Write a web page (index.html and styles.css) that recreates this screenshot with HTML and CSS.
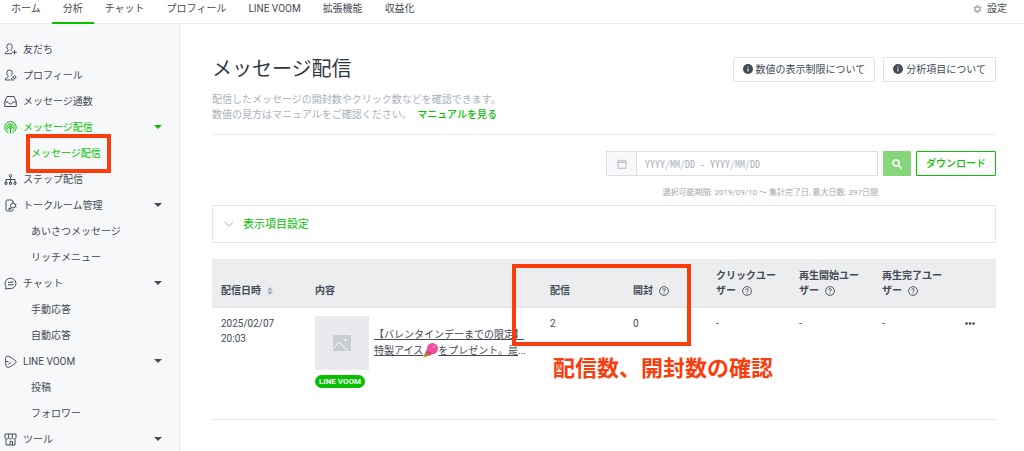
FILE: index.html
```html
<!DOCTYPE html>
<html lang="ja">
<head>
<meta charset="utf-8">
<title>メッセージ配信</title>
<link rel="stylesheet" href="styles.css">
</head>
<body>
<header class="topbar">
  <nav class="tabs">
    <a class="tab" href="#">ホーム</a>
    <a class="tab tab-active" href="#">分析</a>
    <a class="tab" href="#">チャット</a>
    <a class="tab" href="#">プロフィール</a>
    <a class="tab" href="#">LINE VOOM</a>
    <a class="tab" href="#">拡張機能</a>
    <a class="tab" href="#">収益化</a>
  </nav>
  <a class="settings" href="#">
    <svg class="gear" viewBox="0 0 20 20"><circle cx="10" cy="10" r="5" fill="none" stroke="currentColor" stroke-width="3"/><path d="M10 1v4M10 15v4M2.200 5.500l3.500 2M14.300 12.500l3.500 2M2.200 14.500l3.500-2M14.300 7.500l3.500-2" stroke="currentColor" stroke-width="4"/></svg>
    設定
  </a>
</header>
<div class="layout">
  <nav class="sidebar">
    <a class="item" href="#"><svg class="icon" viewBox="0 0 26 26"><path d="M16 21.500H2.500c-.5-3 1.500-4 5-5.500 1.500-.7 1.300-1.800.3-3C6.300 11 5.500 9.500 5.500 7a5.500 5.500 0 0 1 11 0c0 2.500-.8 4-2.300 6-.8 1.200-.8 2.200.8 3M21 14v9M16.500 18.500h9"/></svg>友だち</a>
    <a class="item" href="#"><svg class="icon" viewBox="0 0 26 26"><path d="M13 22H2.500c-.5-3 1.500-4 5-5.500 1.500-.7 1.300-1.800.3-3C6.300 11.500 5.500 10 5.500 7.500a5.500 5.500 0 0 1 11 0c0 2.500-.8 4-2.300 6M15.500 22.500v-3.500l5.500-6 3.500 3-5.500 6zM18.500 16l3 3"/></svg>プロフィール</a>
    <a class="item" href="#"><svg class="icon" viewBox="0 0 26 26"><path d="M6 3h14l4.500 10v10h-23V13zM1.500 14H8c.5 5 9.500 5 10 0h6.500"/></svg>メッセージ通数</a>
    <a class="item item-on" href="#"><svg class="icon" viewBox="0 0 26 26"><path d="M9 23.500a11.500 11.500 0 1 1 8 0M9 19a7.200 7.200 0 1 1 8 0M11.500 15.500a3.500 3.500 0 1 1 3 0M13 14.500V25"/><circle cx="13" cy="12.500" r="1.500"/></svg>メッセージ配信<i class="caret"></i></a>
    <a class="item item-sub item-on" href="#"><span class="marked">メッセージ配信</span></a>
    <a class="item" href="#"><svg class="icon" viewBox="0 0 26 26"><path d="M13 8.500V18M4 18v-5h18v5"/><circle cx="13" cy="5.500" r="2.500"/><path d="M2 18.500h4v4H2zM11 18.500h4v4h-4zM20 18.500h4v4h-4z"/></svg>ステップ配信</a>
    <a class="item" href="#"><svg class="icon" viewBox="0 0 26 26"><path d="M18 6V4.500C18 3 17 2 15.500 2h-9C5 2 4 3 4 4.500v17C4 23 5 24 6.500 24h9c1.500 0 2.500-1 2.500-2.500V20M8 20h5"/><circle cx="18" cy="13" r="5"/><path d="M12 17l-1 3 4-1.500M18 5v3M25 10l-2.500 1M25 16l-2.500-1"/></svg>トークルーム管理<i class="caret"></i></a>
    <a class="item item-sub" href="#">あいさつメッセージ</a>
    <a class="item item-sub" href="#">リッチメニュー</a>
    <a class="item" href="#"><svg class="icon" viewBox="0 0 26 26"><path d="M3 24l1-5A11 10.500 0 1 1 10 23zM8 10.500h11M8 15.500h11"/></svg>チャット<i class="caret"></i></a>
    <a class="item item-sub" href="#">手動応答</a>
    <a class="item item-sub" href="#">自動応答</a>
    <a class="item" href="#"><svg class="icon" viewBox="0 0 26 26"><path d="M5.500 24C2.500 20 2 6 4.500 3c1.500-2 6-.5 11 3S25 12 24.500 14s-5 5-9 7.500-8.500 4.500-10 2.500zM3 13h6M8.500 18.500l5-3.500"/></svg>LINE VOOM<i class="caret"></i></a>
    <a class="item item-sub" href="#">投稿</a>
    <a class="item item-sub" href="#">フォロワー</a>
    <a class="item" href="#"><svg class="icon" viewBox="0 0 26 26"><path d="M2 2h22v7c0 4-6 4-7.300 0C15.500 13 10.500 13 9.300 9 8 13 2 13 2 9zM9.300 2v7M16.700 2v7M4 12.500V24h18V12.500M12 24v-7h5v7"/></svg>ツール<i class="caret"></i></a>
  </nav>
  <main class="main">
    <div class="heading">
      <h1 class="title">メッセージ配信</h1>
      <div class="help">
        <button class="btn" type="button"><svg class="info" viewBox="0 0 20 20"><circle cx="10" cy="10" r="10" fill="currentColor"/><path d="M10 5v2M10 9v6" stroke="#fff" stroke-width="2"/></svg>数値の表示制限について</button>
        <button class="btn" type="button"><svg class="info" viewBox="0 0 20 20"><circle cx="10" cy="10" r="10" fill="currentColor"/><path d="M10 5v2M10 9v6" stroke="#fff" stroke-width="2"/></svg>分析項目について</button>
      </div>
    </div>
    <p class="lead">配信したメッセージの開封数やクリック数などを確認できます。<br>数値の見方はマニュアルをご確認ください。 <a class="manual" href="#">マニュアルを見る</a></p>
    <form class="filter">
      <div class="period">
        <label class="range">
          <span class="addon"><svg class="calendar" viewBox="0 0 20 20"><path d="M2 3.500h16v15H2zM2 7h16M6 1v3M14 1v3"/></svg></span>
          <input class="dates" type="text" placeholder="YYYY/MM/DD - YYYY/MM/DD" aria-label="期間">
        </label>
        <p class="note">選択可能期間: 2019/09/10 〜 集計完了日, 最大日数: 397日間</p>
      </div>
      <button class="search" type="button" aria-label="検索"><svg class="lens" viewBox="0 0 20 20"><circle cx="8" cy="8" r="6"/><path d="M12.500 12.500l6.500 6.500"/></svg></button>
      <button class="download" type="button">ダウンロード</button>
    </form>
    <button class="panel" type="button"><svg class="chevron" viewBox="0 0 20 12"><path d="M1 1.500l9 9 9-9"/></svg>表示項目設定</button>
    <div class="report">
      <table class="table">
        <colgroup><col class="c-date"><col class="c-body"><col class="c-num"><col class="c-num"><col class="c-num"><col class="c-num"><col class="c-num"><col></colgroup>
        <thead>
          <tr>
            <th>配信日時<svg class="sort" viewBox="0 0 12 16"><path d="M6 0l6 7H0zM6 16l6-7H0z"/></svg></th>
            <th>内容</th>
            <th>配信</th>
            <th>開封<svg class="q" viewBox="0 0 20 20"><circle cx="10" cy="10" r="8.800"/><path d="M7.500 8c0-3.500 5-3.500 5-.5 0 2-2.500 2-2.500 4.200M10 13.500v2"/></svg></th>
            <th>クリックユーザー<svg class="q" viewBox="0 0 20 20"><circle cx="10" cy="10" r="8.800"/><path d="M7.500 8c0-3.500 5-3.500 5-.5 0 2-2.500 2-2.500 4.200M10 13.500v2"/></svg></th>
            <th>再生開始ユーザー<svg class="q" viewBox="0 0 20 20"><circle cx="10" cy="10" r="8.800"/><path d="M7.500 8c0-3.500 5-3.500 5-.5 0 2-2.500 2-2.500 4.200M10 13.500v2"/></svg></th>
            <th>再生完了ユーザー<svg class="q" viewBox="0 0 20 20"><circle cx="10" cy="10" r="8.800"/><path d="M7.500 8c0-3.500 5-3.500 5-.5 0 2-2.500 2-2.500 4.200M10 13.500v2"/></svg></th>
            <th></th>
          </tr>
        </thead>
        <tbody>
          <tr>
            <td>2025/02/07<br>20:03</td>
            <td>
              <div class="post">
                <div class="thumb"><svg class="picture" viewBox="0 0 54 48"><rect width="54" height="48" rx="3" fill="#c9cdd2"/><path d="M0 41l18-20 27 27" fill="none" stroke="#e9eaee" stroke-width="4"/><circle cx="38" cy="16" r="4" fill="#e9eaee"/></svg></div>
                <a class="post-link" href="#">【バレンタインデーまでの限定】<br>特製アイス<svg class="ice" viewBox="0 0 30 30"><path d="M0 29L7 14l10 10z" fill="#c98a4b"/><path d="M3 24l6 1M5 19l8 6M9 16L5 26" stroke="#9b6230"/><circle cx="19" cy="11" r="11" fill="#ee4fa0"/><path d="M6 13c0 5 2 4 3 7 2 0 2 3 5 4 3 0 3-3 7-3-8-2-11-5-15-8z" fill="#d9308a"/><circle cx="22" cy="7" r="3" fill="#f97dbd"/></svg>をプレゼント。是</a>
              </div>
              <div class="badge">LINE VOOM</div>
            </td>
            <td>2</td>
            <td>0</td>
            <td>-</td>
            <td>-</td>
            <td>-</td>
            <td><button class="more" type="button" aria-label="メニュー"><svg class="dots" viewBox="0 0 20 6"><circle cx="3" cy="3" r="2.400"/><circle cx="10" cy="3" r="2.400"/><circle cx="17" cy="3" r="2.400"/></svg></button></td>
          </tr>
        </tbody>
      </table>
      <div class="frame"></div>
      <p class="callout">配信数、開封数の確認</p>
    </div>
  </main>
</div>
</body>
</html>
```
FILE: styles.css
```css
* { box-sizing: border-box; }
body {
  margin: 0;
  min-height: 100vh;
  display: flex;
  flex-direction: column;
  background: #fff;
  color: #444b55;
  font: 10px/15px Roboto, "Noto Sans CJK JP", sans-serif;
}
a { color: inherit; text-decoration: none; }
p, h1 { margin: 0; }
button, input { font: inherit; color: inherit; }
svg { flex: none; }

.topbar {
  display: flex;
  justify-content: space-between;
  height: 24px;
  border-bottom: 1px solid #e9ebee;
}
.tabs { display: flex; }
.tab { height: 24px; padding: 0 11px; line-height: 17px; }
.tab-active { border-bottom: 2px solid #08bf00; }
.settings {
  display: flex;
  align-items: center;
  gap: 5px;
  height: 17px;
  padding-right: 17px;
}
.gear { width: 9px; height: 10px; color: #a5b0bb; }

.layout { display: flex; flex: 1; height: 0; overflow: hidden; }
.sidebar {
  flex: none;
  width: 180px;
  padding-top: 12px;
  background: #f7f8fa;
  border-right: 1px solid #e6e8eb;
}
.item {
  display: flex;
  align-items: center;
  gap: 6px;
  height: 26px;
  padding: 0 17px 0 4px;
}
.item-sub { padding-left: 31px; }
.item-on { color: #08bf00; }
.icon {
  width: 13px;
  height: 13px;
  fill: none;
  stroke: currentColor;
  stroke-width: 2;
}
.caret {
  margin-left: auto;
  border: 4px solid transparent;
  border-top-color: currentColor;
  border-bottom: 0;
}
.marked { position: relative; }
.marked::after {
  content: "";
  position: absolute;
  inset: -12px -10px -12px -5px;
  border: 4px solid #fb3c0c;
}

.main { flex: 1; min-width: 0; padding: 31px 28px 0 32px; }
.heading { display: flex; justify-content: space-between; align-items: center; }
.title { font-size: 20px; font-weight: 400; line-height: 28px; color: #303741; }
.help { display: flex; gap: 8px; }
.btn {
  display: flex;
  align-items: center;
  gap: 3px;
  height: 25px;
  padding: 0 9px;
  background: #fff;
  border: 1px solid #dfe1e9;
  border-radius: 1px;
}
.info { width: 10px; height: 10px; }
.lead {
  padding: 9px 0 12px;
  border-bottom: 1px solid #e9ebee;
  color: #a9b1bb;
}
.manual { margin-left: 3px; color: #08bf00; font-weight: 500; }

.filter {
  display: flex;
  justify-content: flex-end;
  align-items: flex-start;
  gap: 5px;
  margin-top: 16px;
}
.range { display: flex; width: 272px; height: 25px; border: 1px solid #dcdfe3; }
.addon {
  display: flex;
  align-items: center;
  justify-content: center;
  width: 30px;
  background: #f7f8fa;
  border-right: 1px solid #dcdfe3;
}
.calendar { width: 10px; height: 10px; fill: none; stroke: #b4b9c0; stroke-width: 2; }
.dates {
  flex: 1;
  min-width: 0;
  padding: 0 8px;
  border: 0;
  font-family: "Noto Sans Mono CJK JP", "Liberation Mono", monospace;
}
.dates::placeholder { color: #a9b1bb; opacity: 1; }
.note { margin-top: 9px; font-size: 8px; line-height: 16px; text-align: right; color: #a0a8b2; }
.search {
  display: flex;
  align-items: center;
  justify-content: center;
  width: 28px;
  height: 25px;
  padding: 0;
  background: #86d67e;
  border: 0;
  border-radius: 1px;
}
.lens { width: 10px; height: 10px; fill: none; stroke: #fff; stroke-width: 3; }
.download {
  height: 25px;
  padding: 0 9px;
  background: #fff;
  border: 1px solid #08bf00;
  border-radius: 1px;
  color: #08bf00;
  font-weight: 500;
}

.panel {
  display: flex;
  align-items: center;
  gap: 9px;
  width: 100%;
  height: 38px;
  margin-top: 4px;
  padding: 0 11px;
  background: #fff;
  border: 1px solid #e4e6ea;
  color: #08bf00;
  font-size: 11px;
}
.chevron { width: 10px; height: 6px; fill: none; stroke: #a9b1bb; stroke-width: 2; }

.report { position: relative; margin-top: 16px; }
.table { width: 100%; table-layout: fixed; border-collapse: collapse; }
.c-date { width: 94px; }
.c-body { width: 235px; }
.c-num { width: 83px; }
th {
  height: 48px;
  padding: 9px;
  background: #ecedef;
  border-bottom: 1px solid #e2e4e8;
  vertical-align: bottom;
  text-align: left;
  font-weight: 700;
}
td {
  height: 112px;
  padding: 8px 9px;
  border-bottom: 1px solid #e6e8eb;
  vertical-align: top;
}
.sort { width: 6px; height: 8px; margin-left: 6px; vertical-align: -1px; fill: #aab1ba; }
.q {
  width: 10px;
  height: 10px;
  margin-left: 6px;
  vertical-align: -2px;
  fill: none;
  stroke: currentColor;
  stroke-width: 1.8;
}
.post { display: flex; align-items: center; gap: 5px; }
.thumb {
  display: flex;
  flex: none;
  align-items: center;
  justify-content: center;
  width: 54px;
  height: 54px;
  background: #e9eaee;
}
.picture { width: 18px; height: 16px; }
.post-link {
  line-height: 16px;
  white-space: nowrap;
  text-decoration: underline;
}
.post-link::after { content: "..."; display: inline-block; }
.ice { width: 15px; height: 15px; vertical-align: -4px; }
.badge {
  width: fit-content;
  margin-top: 5px;
  padding: 0 4px;
  border-radius: 7px;
  background: #08bf00;
  color: #fff;
  font-size: 8px;
  font-weight: 700;
  line-height: 13px;
}
.more { display: block; padding: 6px 0; background: none; border: 0; }
.dots { display: block; width: 10px; height: 3px; fill: #303741; }

.frame {
  position: absolute;
  left: 300px;
  top: 5px;
  width: 179px;
  height: 82px;
  border: 4px solid #fb3c0c;
}
.callout {
  position: absolute;
  left: 341px;
  top: 94px;
  color: #fb3c0c;
  font-size: 22px;
  font-weight: 700;
  line-height: 32px;
}
```
